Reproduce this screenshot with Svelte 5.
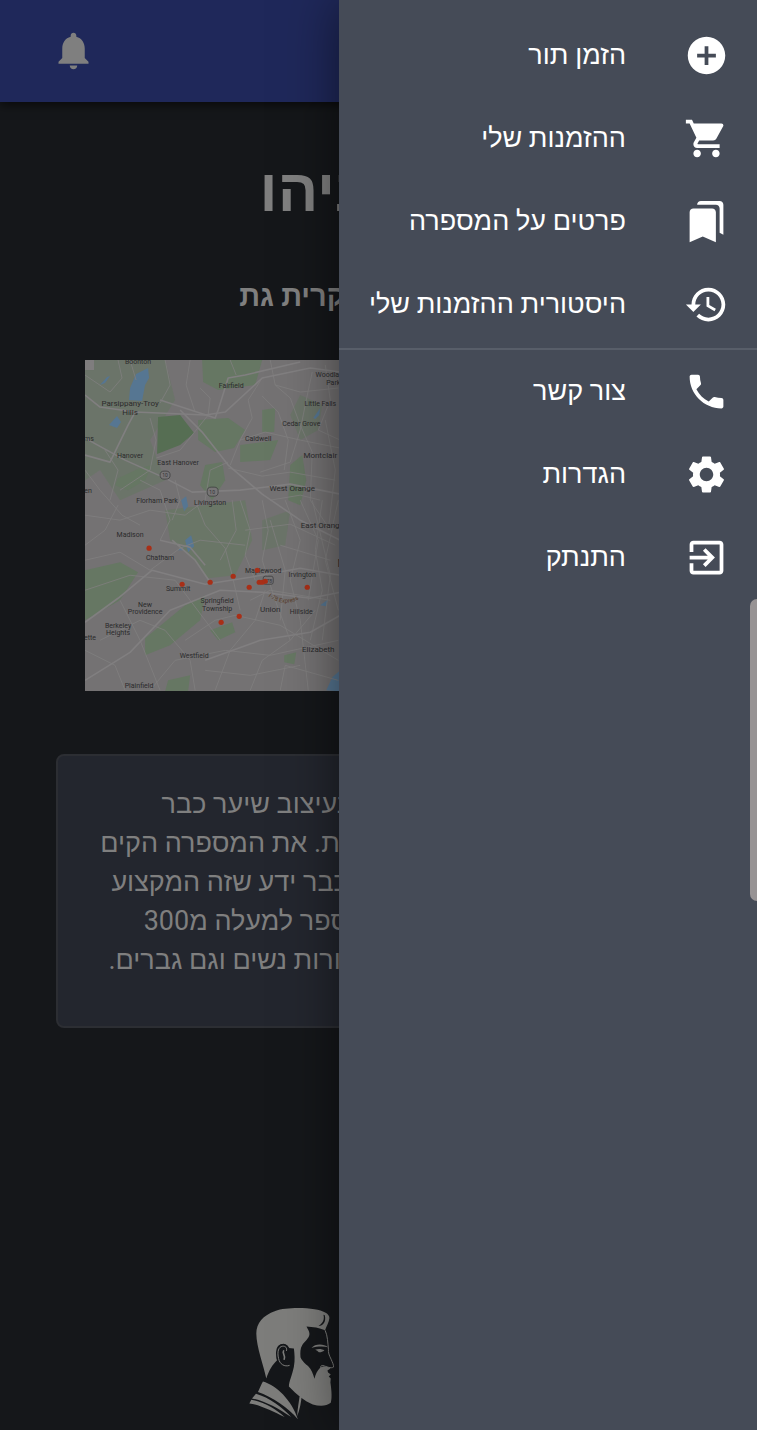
<script>
  const primary = [
    { label: 'הזמן תור', d: 'M12 2C6.48 2 2 6.48 2 12s4.48 10 10 10 10-4.48 10-10S17.52 2 12 2zm5 11h-4v4h-2v-4H7v-2h4V7h2v4h4v2z' },
    { label: 'ההזמנות שלי', d: 'M7 18c-1.1 0-1.99.9-1.99 2S5.9 22 7 22s2-.9 2-2-.9-2-2-2zM1 2v2h2l3.6 7.59-1.35 2.45c-.16.28-.25.61-.25.96 0 1.1.9 2 2 2h12v-2H7.42c-.14 0-.25-.11-.25-.25l.03-.12.9-1.63h7.45c.75 0 1.41-.41 1.75-1.03l3.58-6.49c.08-.14.12-.31.12-.48 0-.55-.45-1-1-1H5.21l-.94-2H1zm16 16c-1.1 0-1.99.9-1.99 2s.89 2 1.99 2 2-.9 2-2-.9-2-2-2z' },
    { label: 'פרטים על המספרה', d: 'M19 18l2 1V3c0-1.1-.9-2-2-2H8.99C7.89 1 7 1.9 7 3h10c1.1 0 2 .9 2 2v13zM15 5H5c-1.1 0-2 .9-2 2v16l7-3 7 3V7c0-1.1-.9-2-2-2z' },
    { label: 'היסטורית ההזמנות שלי', d: 'M13 3c-4.97 0-9 4.03-9 9H1l3.89 3.89.07.14L9 12H6c0-3.87 3.13-7 7-7s7 3.13 7 7-3.13 7-7 7c-1.93 0-3.68-.79-4.94-2.06l-1.42 1.42C8.27 19.99 10.51 21 13 21c4.97 0 9-4.03 9-9s-4.03-9-9-9zm-1 5v5l4.28 2.54.72-1.21-3.5-2.08V8H12z' }
  ];
  const secondary = [
    { label: 'צור קשר', d: 'M6.62 10.79c1.44 2.83 3.76 5.14 6.59 6.59l2.2-2.2c.27-.27.67-.36 1.02-.24 1.12.37 2.33.57 3.57.57.55 0 1 .45 1 1V20c0 .55-.45 1-1 1-9.39 0-17-7.61-17-17 0-.55.45-1 1-1h3.5c.55 0 1 .45 1 1 0 1.25.2 2.45.57 3.57.11.35.03.74-.25 1.02l-2.2 2.2z' },
    { label: 'הגדרות', d: 'M19.14 12.94c.04-.3.06-.61.06-.94 0-.32-.02-.64-.07-.94l2.03-1.58c.18-.14.23-.41.12-.61l-1.92-3.32c-.12-.22-.37-.29-.59-.22l-2.39.96c-.5-.38-1.03-.7-1.62-.94l-.36-2.54c-.04-.24-.24-.41-.48-.41h-3.84c-.24 0-.43.17-.47.41l-.36 2.54c-.59.24-1.13.57-1.62.94l-2.39-.96c-.22-.08-.47 0-.59.22L2.74 8.87c-.12.21-.08.47.12.61l2.03 1.58c-.05.3-.09.63-.09.94s.02.64.07.94l-2.03 1.58c-.18.14-.23.41-.12.61l1.92 3.32c.12.22.37.29.59.22l2.39-.96c.5.38 1.03.7 1.62.94l.36 2.54c.05.24.24.41.48.41h3.84c.24 0 .44-.17.47-.41l.36-2.54c.59-.24 1.13-.56 1.62-.94l2.39.96c.22.08.47 0 .59-.22l1.92-3.32c.12-.22.07-.47-.12-.61l-2.01-1.58zM12 15.6c-1.98 0-3.6-1.62-3.6-3.6s1.62-3.6 3.6-3.6 3.6 1.62 3.6 3.6-1.62 3.6-3.6 3.6z' },
    { label: 'התנתק', d: 'M10.09 15.59L11.5 17l5-5-5-5-1.41 1.41L12.67 11H3v2h9.67l-2.58 2.59zM19 3H5c-1.11 0-2 .9-2 2v4h2V5h14v14H5v-4H3v4c0 1.1.89 2 2 2h14c1.1 0 2-.9 2-2V5c0-1.1-.9-2-2-2z' }
  ];

  // Town labels: x, y, text, size
  const towns = [
    [138, 364, 'Boonton', 7], [130, 406, 'Parsippany-Troy', 8], [130, 415, 'Hills', 8],
    [231, 388, 'Fairfield', 7], [331, 377, 'Woodland', 7], [333, 385, 'Park', 7],
    [320, 406, 'Little Falls', 7], [301, 426, 'Cedar Grove', 7], [258, 441, 'Caldwell', 7],
    [320, 458, 'Montclair', 8], [130, 458, 'Hanover', 7], [178, 465, 'East Hanover', 7],
    [292, 491, 'West Orange', 8], [157, 503, 'Florham Park', 7], [210, 505, 'Livingston', 7],
    [322, 528, 'East Orange', 8], [130, 537, 'Madison', 7], [160, 560, 'Chatham', 7],
    [263, 573, 'Maplewood', 7], [302, 577, 'Irvington', 7], [178, 591, 'Summit', 7],
    [217, 603, 'Springfield', 7], [217, 611, 'Township', 7], [270, 612, 'Union', 8],
    [301, 614, 'Hillside', 7], [145, 607, 'New', 7], [145, 614, 'Providence', 7],
    [118, 628, 'Berkeley', 7], [118, 635, 'Heights', 7], [194, 658, 'Westfield', 7],
    [318, 652, 'Elizabeth', 8], [139, 688, 'Plainfield', 7], [89, 441, 'ms', 7],
    [88, 493, 'en', 7], [90, 640, 'ette', 7], [354, 567, 'Newark', 10]
  ];
  const stops = [
    [149, 548], [182, 584], [210, 582], [233, 576], [257, 570], [249, 587],
    [259, 582], [262, 582], [265, 581], [307, 587], [221, 622], [239, 616]
  ];
  const highways = [
    'M85 455 L110 462 L128 425 L135 412 L205 415 L225 412 L262 378 L310 368 L340 372',
    'M85 395 L100 407 L135 412 M180 410 L202 432 L228 465 L262 494 L300 520 L340 540',
    'M85 622 L118 598 L152 570 L205 584 L250 577 L300 568 L340 575',
    'M85 680 L130 652 L170 610 L220 590 L262 592 L310 598 L340 592',
    'M85 438 L125 460 L165 478 L192 492 L240 490 L290 484 L340 494',
    'M172 540 L195 560 L210 582 M160 540 L190 547 L205 565',
    'M205 660 L260 640 L310 632 L340 615 M160 400 L215 418 L218 410 L228 378 L245 375 L300 362'
  ];
  const streets = [
    'M85 375 L110 392 L122 378 L118 360', 'M165 360 L170 385 L160 403', 'M190 360 L186 385 L195 412',
    'M200 388 L210 398 L208 415 L180 450 L156 458', 'M150 418 L156 440 L150 470 L120 490',
    'M85 470 L100 490 L122 515 L140 525', 'M85 515 L120 520 L150 510 L185 515 L205 500 L210 470 L228 462',
    'M230 465 L240 440 L252 418 L248 400 L262 378', 'M240 440 L265 432 L300 440 L340 448',
    'M262 396 L278 412 L288 440 L284 470', 'M275 385 L290 398 L300 425 L312 452 L310 500 L330 530',
    'M312 372 L306 400 L300 430 L290 462 L260 472', 'M228 468 L262 476 L290 472 L335 480',
    'M195 500 L205 525 L225 548 L232 575 L240 610', 'M240 500 L250 530 L245 555 L255 580',
    'M262 500 L268 530 L262 560 L275 600 L290 640', 'M285 500 L300 540 L290 580 L300 620 L308 690',
    'M322 500 L315 550 L322 590 L310 640', 'M338 500 L325 560 L338 610', 'M245 530 L290 524 L335 545',
    'M85 560 L120 552 L150 570 L180 548 L200 540 L245 545', 'M85 590 L130 575 L175 580 L190 600 L220 640',
    'M100 640 L140 620 L165 630 L190 660 L195 690', 'M85 650 L115 665 L125 690', 'M150 690 L175 660 L225 650 L270 655 L338 640',
    'M120 600 L140 640 L160 690', 'M185 640 L215 620 L235 615 L280 625 L338 660', 'M215 690 L230 650 L255 620 L265 590',
    'M250 690 L262 660 L290 640 L315 610', 'M280 690 L285 665 L338 680', 'M205 670 L250 675 L300 665',
    'M110 500 L118 470 L105 450', 'M140 480 L160 490 L170 520 L160 540', 'M175 480 L180 500 L172 520',
    'M325 365 L330 400 L318 430 L340 440', 'M270 500 L300 495 L320 500', 'M280 545 L330 560', 'M250 600 L270 590 L330 600',
    'M300 500 L318 540 L308 600', 'M312 500 L330 575 L322 640', 'M270 520 L285 570 L280 620', 'M325 420 L335 470 L328 530',
    'M232 500 L236 530 L220 560', 'M85 545 L105 530 L118 505', 'M130 360 L136 380', 'M230 360 L236 375', 'M270 360 L275 385 L300 392 L338 388'
  ];
</script>

{#snippet menu(items)}
  <ul>
    {#each items as item}
      <li>
        <button type="button" class="entry">
          <svg class="icon" viewBox="0 0 24 24" aria-hidden="true"><path d={item.d} /></svg>
          <span class="label">{item.label}</span>
        </button>
      </li>
    {/each}
  </ul>
{/snippet}

<div class="app" dir="rtl">
  <div class="page">
    <header>
      <button type="button" class="bell" aria-label="התראות">
        <svg class="icon" viewBox="0 0 24 24" aria-hidden="true">
          <path d="M12 22c1.1 0 2-.9 2-2h-4c0 1.1.89 2 2 2zm6-6v-5c0-3.07-1.64-5.64-4.5-6.32V4c0-.83-.67-1.5-1.5-1.5s-1.5.67-1.5 1.5v.68C7.63 5.36 6 7.92 6 11v5l-2 2v1h16v-1l-2-2z" />
        </svg>
      </button>
    </header>

    <main>
      <h1>רן נתניהו</h1>
      <h2>רחוב הברוש, קרית גת</h2>

      <svg class="map" viewBox="85 360 586 331" direction="ltr">
        <rect x="85" y="360" width="586" height="331" fill="#747273" />
        <g fill="#667763">
          <path d="M85 360H165L175 400 150 440 165 480 120 500 100 470 85 480Z" opacity=".6" />
          <path d="M202 360H262L255 385 218 390 203 382Z" />
          <path d="M198 420 L228 418 245 430 234 448 215 452 198 440Z" />
          <path d="M118 478 L140 468 152 465 145 480 128 490 115 485Z" />
          <path d="M262 410 L275 408 274 432 262 432Z M240 445 L278 440 270 460 240 462Z" />
          <path d="M290 465 L302 455 306 480 300 505 288 500Z" />
          <path d="M205 465 L222 462 225 480 212 500 200 485Z" />
          <path d="M165 510 L245 500 252 540 235 575 208 578 190 555 170 540Z" opacity=".7" />
          <path d="M85 570 L120 562 138 572 120 600 85 620Z" />
          <path d="M145 638 L185 605 205 595 200 620 170 645 145 655Z" />
          <path d="M210 630 L232 622 235 632 218 640Z M168 680 L190 675 188 691 165 691Z M284 655 L296 652 294 664 284 662Z" />
          <path d="M300 395 L322 405 318 430 300 440 290 415Z M262 520 L290 510 285 545 262 550Z" opacity=".6" />
        </g>
        <path d="M158 417 L180 415 194 433 180 445 157 454Z" fill="#566e53" />
        <g fill="#567692">
          <path d="M136 374 L148 368 149 378 145 385 142 401 129 400 130 388Z" />
          <path d="M109 425 L117 416 121 422 117 428Z M100 385 L107 377 110 376 105 383Z" />
          <path d="M181 500 L186 496 188 506 184 511Z M185 540 L191 535 194 546 188 552Z M178 550 L182 546 184 550Z" />
          <path d="M313 418 L320 408 319 415 315 419Z M320 605 L328 599 326 606Z M326 690 L332 677 340 670V691Z" />
        </g>
        <g class="roads">
          {#each streets as d}<path {d} stroke-width="0.8" />{/each}
          {#each highways as d}<path {d} stroke-width="1.6" />{/each}
        </g>
        <rect x="85" y="360" width="9" height="10" fill="#7f7d7e" />
        <g class="shield">
          <rect x="160" y="471" width="10" height="8" rx="4" /><text x="165" y="477">10</text>
          <rect x="207" y="487" width="11" height="9" rx="4" /><text x="212" y="494">10</text>
          <rect x="263" y="576" width="10" height="8" rx="2" /><text x="269" y="583">78</text>
        </g>
        <g class="towns">
          {#each towns as [x, y, name, size]}<text {x} {y} font-size={size}>{name}</text>{/each}
        </g>
        <path id="express" d="M268 596 Q286 610 306 594" fill="none" />
        <text class="express"><textPath href="#express">I-78 Express</textPath></text>
        <g fill="#a82f17">
          {#each stops as [cx, cy]}<circle {cx} {cy} r="2.6" />{/each}
        </g>
      </svg>

      <section class="about">
        <p>
          הספר שלנו עוסק כולו בעיצוב שיער כבר<br />
          כבר יותר מעשר שנים ברציפות. את המספרה הקים<br />
          עוד כשהיה ילד צעיר מאוד וכבר ידע שזה המקצוע<br />
          שלו. היום הוא כבר גם מספר למעלה מ300<br />
          לקוחות ישנים ולקוחות, תספורות נשים וגם גברים.
        </p>
      </section>

      <svg class="logo" viewBox="40 35 771 340" preserveAspectRatio="xMinYMin meet" aria-hidden="true">
        <g fill="#7d7d7b">
          <path d="M95 250C88 215 65 155 65 115C65 84 85 60 122 47C150 37 205 36 240 42C266 46 285 55 285 68C284 82 275 94 272 105C255 98 235 95 216 94C220 102 225 108 225 116C224 130 210 138 203 150C197 160 197 172 198 186C204 200 214 206 222 214C231 224 236 236 240 251C243 238 249 226 257 218C266 212 281 214 288 220L279 226L281 232L289 238L283 244L289 250L288 262C292 290 293 310 289 323C276 334 255 334 235 328C210 318 188 300 163 274C163 260 173 240 178 215C182 195 180 175 178 160L162 158C156 147 145 144 135 149C126 157 124 177 127 196C115 207 103 225 95 250Z" />
          <path d="M85 259C125 270 172 315 190 373C163 340 112 305 70 291C75 279 80 268 85 259Z" />
          <path d="M64 296C103 307 145 338 170 366C130 340 92 318 52 310Z" />
          <path d="M50 314C90 322 122 341 150 366C115 350 78 330 44 325Z" />
          <path d="M202 298C200 322 196 342 188 364C189 340 193 322 195 305Z" />
          <path d="M231 158C242 144 268 145 281 156C268 153 248 153 231 158Z" />
          <path d="M242 164C251 160 263 161 270 166C264 170 258 172 253 171C250 168 247 166 242 164Z" />
        </g>
        <path d="M272 105C280 122 280 144 282 162C281 172 284 180 290 192C294 202 299 211 297 216C290 221 276 214 265 211C260 211 258 213 259 218" fill="none" stroke="#7d7d7b" stroke-width="3" />
        <path d="M267 58C271 72 265 84 252 92C266 92 276 80 271 60Z" fill="#15171a" />
        <g fill="none" stroke-linecap="round">
          <path d="M166 207C150 215 134 206 130 188C125 168 130 151 144 150C154 149 161 156 160 164C154 172 168 183 162 193C157 197 152 196 149 190" stroke="#15171a" stroke-width="8" />
          <path d="M164 211C150 216 135 207 132 190C127 170 132 154 144 153C153 152 158 158 156 166" stroke="#7d7d7b" stroke-width="3" />
          <path d="M147 167C142 174 154 182 149 192" stroke="#7d7d7b" stroke-width="5" />
        </g>
      </svg>
    </main>
  </div>

  <nav class="drawer">
    {@render menu(primary)}
    <hr />
    {@render menu(secondary)}
  </nav>
  <div class="handle"></div>
</div>

<style>
  :global(body) { background: #15171a; }
  * { box-sizing: border-box; }
  .app {
    position: relative;
    min-height: 100vh;
    overflow: hidden;
    background: #15171a;
    font-family: Roboto, "Liberation Sans", sans-serif;
    color: #7f7f7f;
  }
  header {
    display: flex;
    justify-content: flex-end;
    align-items: center;
    height: 102px;
    padding: 0 0 2px 51px;
    background: #1f285a;
    box-shadow: 0 3px 10px rgba(0, 0, 0, 0.6);
  }
  button {
    border: 0;
    padding: 0;
    background: none;
    color: inherit;
    font: inherit;
    cursor: pointer;
  }
  .icon { display: block; width: 45px; height: 45px; fill: currentColor; flex: none; }
  main {
    display: flex;
    flex-direction: column;
    align-items: center;
  }
  h1 { margin: 45px 0 0; font-size: 60px; line-height: 88px; }
  h2 { margin: 41px 0 0; font-size: 29px; line-height: 40px; }
  .map { display: block; width: 77.5%; margin-top: 44px; }
  .roads { fill: none; stroke: #817f80; stroke-linejoin: round; }
  .towns { text-anchor: middle; fill: #2b2b2c; font-family: Roboto, sans-serif; direction: ltr; }
  .shield { text-anchor: middle; font-size: 5px; fill: #343436; direction: ltr; }
  .shield rect { fill: #777576; stroke: #3e3e40; stroke-width: 0.8; }
  .express { font-size: 6px; fill: #59402c; direction: ltr; }
  .about {
    width: calc(100% - 111px);
    margin-top: 63px;
    padding: 29px 24px 46px;
    border: 2px solid #2c2e33;
    border-radius: 8px;
    background: #23262e;
    text-align: center;
    white-space: nowrap;
  }
  p { margin: 0; font-size: 27px; line-height: 39px; }
  .logo { width: 261px; height: 113px; margin-top: 279px; }
  .drawer {
    position: absolute;
    inset: 0 0 0 auto;
    width: 418px;
    padding-top: 14px;
    background: #454b57;
    color: #fff;
    box-shadow: 0 0 50px rgba(0, 0, 0, 0.5);
  }
  ul { margin: 0; padding: 0; list-style: none; }
  .entry {
    display: flex;
    align-items: center;
    gap: 58px;
    width: 100%;
    height: 83px;
    padding: 0 28px;
    font-size: 27px;
    line-height: 40px;
    white-space: nowrap;
  }
  .label { padding-bottom: 2px; }
  hr { height: 2px; margin: 2px 0 0; border: 0; background: #585e69; }
  .handle {
    position: absolute;
    top: 599px;
    right: 0;
    width: 7px;
    height: 302px;
    border-radius: 8px 0 0 8px;
    background: #979394;
  }
</style>
